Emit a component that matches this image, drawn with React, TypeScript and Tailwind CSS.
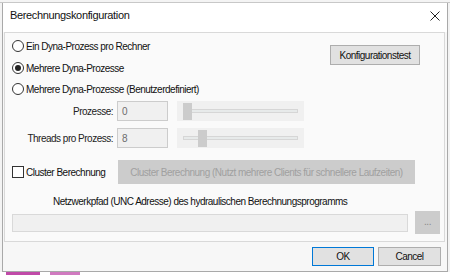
const Radio = ({ checked, label }: { checked?: boolean; label: string }) => (
  <div className="flex items-center h-[14px]">
    <div className="w-[12px] h-[12px] rounded-full border border-[#333] bg-white flex items-center justify-center">
      {checked && <div className="w-[6px] h-[6px] rounded-full bg-[#222]"></div>}
    </div>
    <span className="ml-[2px] text-[#111] whitespace-nowrap">{label}</span>
  </div>
);

const SliderRow = ({ label, value, thumb }: { label: string; value: string; thumb: number }) => (
  <div className="flex items-center ml-[13px]">
    <span className="w-[88px] text-right text-[#222] whitespace-nowrap">{label}</span>
    <div className="ml-[4px] w-[51px] h-[20px] border border-[#cccccc] bg-[#f0f0f0] flex items-center pl-[4px] text-[#6d6d6d]">
      {value}
    </div>
    <div className="ml-[9px] w-[127px] h-[20px] bg-[#f0f0f0] flex items-center px-[6px] relative">
      <div className="w-full h-[4px] border border-[#d6d6d6] bg-[#e7eaea]"></div>
      <div
        className="absolute top-[2px] w-[9px] h-[17px] bg-[#cccccc]"
        style={{ left: thumb }}
      ></div>
    </div>
  </div>
);

export default function App() {
  return (
    <div
      className="w-[450px] h-[275px] bg-[#f3f3f3] flex flex-col overflow-hidden text-[10px] tracking-[-0.5px]"
      style={{ fontFamily: '"Liberation Sans", Arial, sans-serif' }}
    >
      <div className="h-[3px] bg-[#f4f4f4] border-b border-[#c8c8c8]"></div>

      <div className="mx-[2px] h-[269px] border border-[#a9a9a9] border-t-0 bg-[#f7f7f7] flex flex-col">
        {/* title bar */}
        <div className="h-[29px] bg-white flex items-center justify-between pl-[7px] pr-[6px] pb-[4px]">
          <span className="text-[#111] text-[11px] tracking-[-0.35px] whitespace-nowrap">Berechnungskonfiguration</span>
          <svg width="10" height="10" viewBox="0 0 10 10" className="mr-[1px]">
            <path d="M0.5 0.5 L9.5 9.5 M9.5 0.5 L0.5 9.5" stroke="#222" strokeWidth="1" />
          </svg>
        </div>

        {/* group box */}
        <div className="ml-[1px] mr-[2px] h-[210px] border border-[#d9d9d9] bg-[#fafafa] flex flex-col pl-[7px] pt-[6px]">
          <div className="flex justify-between">
            <div className="flex flex-col">
              <Radio label="Ein Dyna-Prozess pro Rechner" />
              <div className="mt-[8px]">
                <Radio checked label="Mehrere Dyna-Prozesse" />
              </div>
              <div className="mt-[7px]">
                <Radio label="Mehrere Dyna-Prozesse (Benutzerdefiniert)" />
              </div>
            </div>
            <div className="mt-[6px] mr-[24px] w-[90px] h-[20px] border border-[#adadad] bg-[#e1e1e1] flex items-center justify-center text-[#111] whitespace-nowrap">
              Konfigurationstest
            </div>
          </div>

          <div className="mt-[5px]">
            <SliderRow label="Prozesse:" value="0" thumb={6} />
          </div>
          <div className="mt-[7px]">
            <SliderRow label="Threads pro Prozess:" value="8" thumb={21} />
          </div>

          <div className="mt-[12px] flex items-center h-[24px]">
            <div className="w-[12px] h-[12px] border border-[#333] bg-white"></div>
            <span className="ml-[2px] w-[92px] text-[#111] whitespace-nowrap">Cluster Berechnung</span>
            <div className="w-[297px] h-[24px] bg-[#cccccc] flex items-center justify-center text-[#a0a0a0] whitespace-nowrap">
              Cluster Berechnung (Nutzt mehrere Clients für schnellere Laufzeiten)
            </div>
          </div>

          <div className="mt-[10px] h-[14px] flex items-center pl-[41px] text-[#111] whitespace-nowrap">
            Netzwerkpfad (UNC Adresse) des hydraulischen Berechnungsprogramms
          </div>

          <div className="mt-[3px] h-[23px] flex items-center">
            <div className="w-[396px] h-[18px] border border-[#d9d9d9] bg-[#f0f0f0]"></div>
            <div className="ml-[7px] w-[25px] h-[23px] bg-[#cccccc] flex items-center justify-center text-[#8a8a8a] pb-[2px]">
              ...
            </div>
          </div>
        </div>

        {/* footer */}
        <div className="flex-1 flex items-center justify-end gap-[4px] pr-[6px]">
          <div className="w-[62px] h-[19px] border border-[#0078d7] bg-[#e1e1e1] flex items-center justify-center text-[#111]">
            OK
          </div>
          <div className="w-[63px] h-[19px] border border-[#adadad] bg-[#e1e1e1] flex items-center justify-center text-[#111]">
            Cancel
          </div>
        </div>
      </div>

      <div className="flex-1 flex bg-white">
        <div className="ml-[6px] w-[34px] bg-[#c04aa8]"></div>
        <div className="ml-[10px] w-[30px] bg-[#d07ac0]"></div>
      </div>
    </div>
  );
}
